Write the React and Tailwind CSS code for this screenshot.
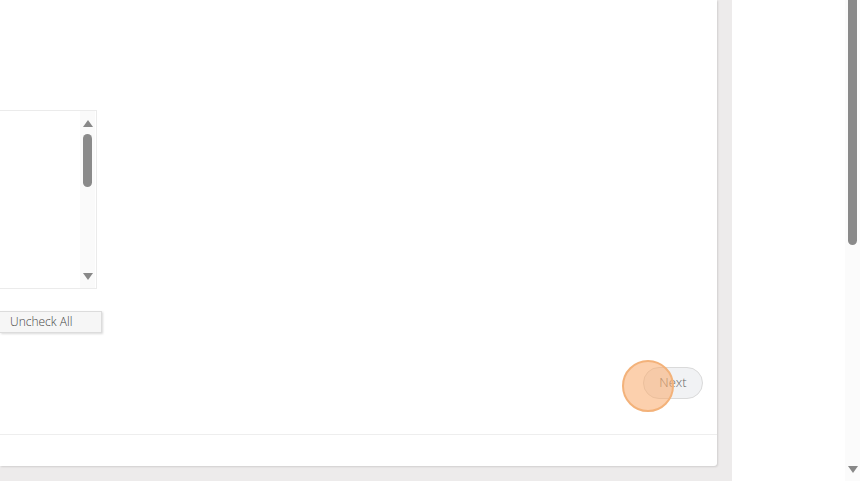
export default function App() {
  return (
    <div className="flex w-[860px] h-[481px] bg-white overflow-hidden" style={{ fontFamily: '"Open Sans", "Liberation Sans", sans-serif' }}>
      <div className="w-[732px] h-full bg-[#edebeb] pr-[15px] pb-[15px] shrink-0">
        <div className="h-full bg-white rounded-br-[3px] shadow-[1px_1px_2px_rgba(0,0,0,0.12)] flex flex-col">
          <div className="flex-1 flex flex-col pt-[110px]">
            <div className="w-[97px] h-[179px] border border-l-0 border-[#ebebeb] flex justify-end">
              <div className="w-[15px] h-full bg-[#fafafa] flex flex-col items-center pt-[9px] pb-[8px] mr-[1px]">
                <div className="w-0 h-0 border-l-[5px] border-r-[5px] border-b-[7px] border-l-transparent border-r-transparent border-b-[#888]" />
                <div className="w-[9px] h-[53px] mt-[7px] bg-[#8a8a8a] rounded-[5px]" />
                <div className="flex-1" />
                <div className="w-0 h-0 border-l-[5px] border-r-[5px] border-t-[7px] border-l-transparent border-r-transparent border-t-[#888]" />
              </div>
            </div>
            <div className="mt-[22px] w-[102px] h-[22px] bg-[#f6f6f6] border border-l-0 border-[#dcdcdc] shadow-[1px_1px_2px_rgba(0,0,0,0.15)] flex items-center pl-[10px] text-[12px] font-light text-[#444]">
              Uncheck All
            </div>
            <div className="mt-[34px] flex justify-end pr-[14px]">
              <div className="relative">
                <div className="w-[60px] h-[32px] rounded-full bg-[#f1f2f4] border border-[#dadada] flex items-center justify-center text-[13px] font-light text-[#666]">
                  Next
                </div>
                <div className="absolute left-[-21px] top-[-7px] w-[52px] h-[52px] rounded-full bg-[rgba(249,170,105,0.55)] border-2 border-[#f3b27a]" />
              </div>
            </div>
          </div>
          <div className="h-[32px] border-t border-[#eeeeee]" />
        </div>
      </div>
      <div className="flex-1" />
      <div className="w-[15px] h-full bg-[#fbfbfb] flex flex-col items-center">
        <div className="w-[9px] h-[245px] bg-[#8a8a8a] rounded-b-[5px]" />
        <div className="flex-1" />
        <div className="mb-[8px] w-0 h-0 border-l-[5px] border-r-[5px] border-t-[7px] border-l-transparent border-r-transparent border-t-[#888]" />
      </div>
    </div>
  );
}
